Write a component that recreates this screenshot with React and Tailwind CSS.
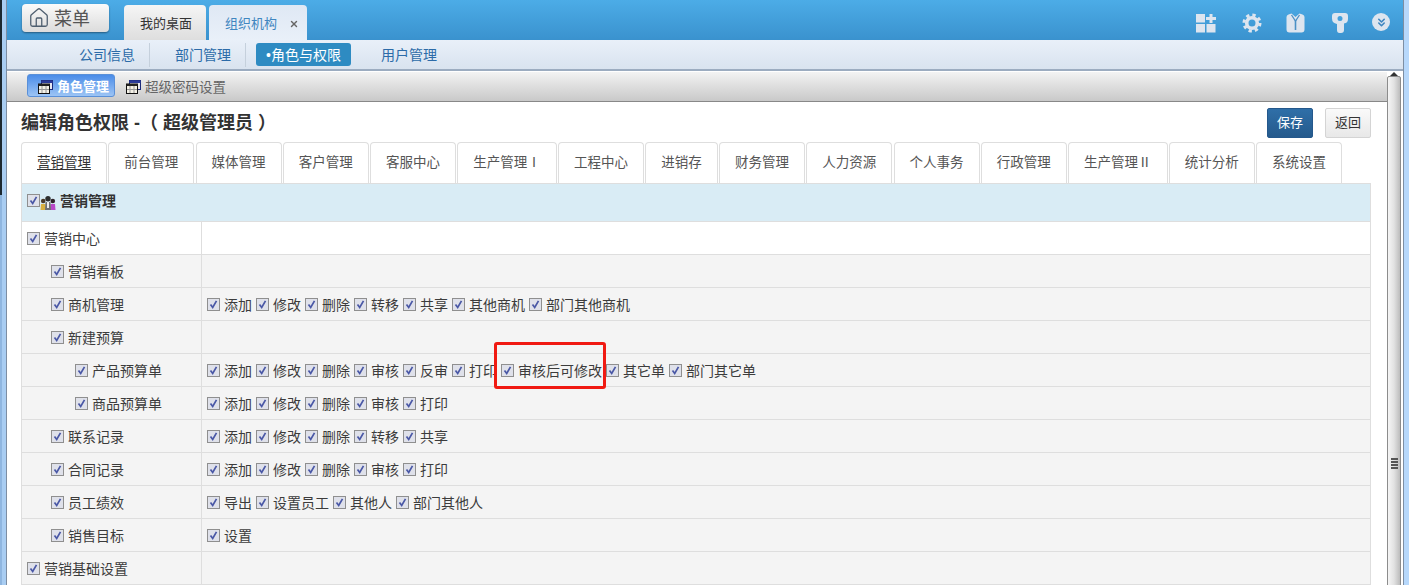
import React from 'react';
import { House, X, ChevronsDown } from 'lucide-react';

const topTabs = ['营销管理', '前台管理', '媒体管理', '客户管理', '客服中心', '生产管理Ⅰ', '工程中心', '进销存', '财务管理', '人力资源', '个人事务', '行政管理', '生产管理Ⅱ', '统计分析', '系统设置'];

const rows = [
  { label: '营销中心', level: 0, white: true, items: [] },
  { label: '营销看板', level: 1, items: [] },
  { label: '商机管理', level: 1, items: ['添加', '修改', '删除', '转移', '共享', '其他商机', '部门其他商机'] },
  { label: '新建预算', level: 1, items: [] },
  { label: '产品预算单', level: 2, items: ['添加', '修改', '删除', '审核', '反审', '打印', '审核后可修改', '其它单', '部门其它单'] },
  { label: '商品预算单', level: 2, items: ['添加', '修改', '删除', '审核', '打印'] },
  { label: '联系记录', level: 1, items: ['添加', '修改', '删除', '转移', '共享'] },
  { label: '合同记录', level: 1, items: ['添加', '修改', '删除', '审核', '打印'] },
  { label: '员工绩效', level: 1, items: ['导出', '设置员工', '其他人', '部门其他人'] },
  { label: '销售目标', level: 1, items: ['设置'] },
  { label: '营销基础设置', level: 0, items: [] },
];

const Check = () => (
  <span className="flex h-[13px] w-[13px] shrink-0 items-center justify-center border border-[#8f8f8f] bg-[#dfe1ea]">
    <svg width="11" height="11" viewBox="0 0 11 11" fill="none">
      <path d="M2.5 5.5 L4.7 8.5 L8.5 1.8" stroke="#4a58a6" strokeWidth="1.7" />
    </svg>
  </span>
);

const WinIcon = () => (
  <svg width="15" height="14" viewBox="0 0 15 14">
    <rect x="3.5" y="0.5" width="11" height="9" fill="#e8e8f0" stroke="#1b2a7a" />
    <rect x="3.5" y="0.5" width="11" height="2.5" fill="#2a3a9a" />
    <rect x="0.5" y="4" width="11" height="9.5" fill="#f4f1e6" stroke="#111" />
    <rect x="0.5" y="4" width="11" height="2" fill="#222" />
    <path d="M4 6v7M8 6v7M1 9.5h10" stroke="#999" />
  </svg>
);

const PeopleIcon = () => (
  <svg width="16" height="14" viewBox="0 0 16 14">
    <circle cx="3.2" cy="5" r="2.3" fill="#4a3a28" />
    <path d="M0.5 14 L1 8 H5.5 L6 14Z" fill="#d8b040" />
    <circle cx="12.8" cy="5" r="2.3" fill="#2e2228" />
    <path d="M10 14 L10.500 8 H15 L15.500 14Z" fill="#b848c8" />
    <circle cx="8" cy="2.800" r="2.700" fill="#2e2e2e" />
    <path d="M5 14 L5.500 6 H10.500 L11 14Z" fill="#6d6f72" />
    <path d="M7 6 H9 V12 H7Z" fill="#eeeeee" />
  </svg>
);

const AddGridIcon = () => (
  <svg width="20" height="20" viewBox="0 0 20 20" fill="#dde5ef">
    <rect x="0" y="1" width="9" height="8.500" />
    <rect x="0" y="11" width="9" height="8.500" />
    <rect x="10.500" y="11" width="9" height="8.500" />
    <path d="M13.500 1h3v3h3.500v3h-3.500v3h-3v-3H10V4h3.500Z" />
  </svg>
);

const GearIcon = () => (
  <svg width="20" height="20" viewBox="0 0 20 20" fill="none">
    <circle cx="10" cy="10" r="8" stroke="#dde5ef" strokeWidth="3" strokeDasharray="3.3 3" />
    <circle cx="10" cy="10" r="5.300" stroke="#dde5ef" strokeWidth="3.600" />
  </svg>
);

const ShirtIcon = () => (
  <svg width="19" height="20" viewBox="0 0 19 20">
    <path d="M0.500 4 Q0.500 2 2.500 1.500 L5.500 0.500 L9.500 4 L13.500 0.500 L16.500 1.500 Q18.500 2 18.500 4 V16.500 Q18.500 19.500 15.500 19.500 H3.500 Q0.500 19.500 0.500 16.500Z" fill="#dde5ef" />
    <path d="M5.500 2 L9.500 8 L13.500 2" stroke="#4b91c6" strokeWidth="1.300" fill="none" />
    <path d="M9.500 7 V17" stroke="#4b91c6" strokeWidth="1.600" />
  </svg>
);

const KeyIcon = () => (
  <svg width="16" height="20" viewBox="0 0 16 20">
    <path fillRule="evenodd" d="M3 0H13Q16 0 16 3V6Q16 10 12 10.500V17Q12 20 9 20H7.500Q5 20 5 17V11Q0 10 0 5.500V3Q0 0 3 0ZM8 3a2.500 2.500 0 1 0 0 5 2.500 2.500 0 0 0 0-5Z" fill="#dde5ef" />
  </svg>
);

const Row = ({ row }) => {
  const indent = ['pl-[5px]', 'pl-[29px]', 'pl-[53px]'][row.level];
  return (
    <div className={`flex h-[33px] border-b border-[#dedede] ${row.white ? 'bg-white' : 'bg-[#f4f4f4]'}`}>
      <div className={`flex w-[180px] shrink-0 items-center gap-1 border-r border-[#dedede] ${indent}`}>
        <Check />
        <span className="pt-[2px]">{row.label}</span>
      </div>
      <div className="flex flex-1 items-center gap-1 pl-[5px]">
        {row.items.map((item) => (
          <div key={item} className="relative flex items-center gap-1">
            <Check />
            <span className="pt-[2px]">{item}</span>
            {item === '审核后可修改' && (
              <div className="absolute left-[-7px] top-[-17px] h-[47px] w-[112px] rounded-[3px] border-[3px] border-[#f01a12]" />
            )}
          </div>
        ))}
      </div>
    </div>
  );
};

export default function App() {
  return (
    <div className="flex h-[585px] w-[1409px] overflow-hidden bg-white text-[14px] leading-[20px] text-[#3c3c3c] font-['Liberation_Sans','Noto_Sans_CJK_SC',sans-serif]">
      <div className="w-[2px] shrink-0 bg-[linear-gradient(to_bottom,#1c2830_195px,#8fb6e0_195px)]" />
      <div className="w-[4px] shrink-0 bg-[#a9cdf2]" />

      <div className="flex min-w-0 flex-1 flex-col border-l border-[#7d8ea3]">
        {/* top bar */}
        <div className="flex h-[40px] shrink-0 items-start bg-gradient-to-b from-[#4cace7] to-[#3a92ce] pl-[15px] pr-[13px]">
          <div className="mt-[4px] flex h-[28px] w-[87px] items-center gap-[4px] rounded-[4px] bg-gradient-to-b from-[#fafafa] to-[#dcdcdc] pl-[6px] text-[18px] text-[#555] shadow-[0_1px_2px_rgba(0,0,0,0.4)]">
            <House size={22} strokeWidth={1.4} className="text-[#4f5f70]" />
            <span className="pt-[2px]">菜单</span>
          </div>
          <div className="ml-[15px] mt-[5px] flex h-[35px] w-[82px] items-center justify-center rounded-t-[4px] bg-gradient-to-b from-[#f5f5f5] to-[#dedede] pl-[2px] pt-[2px] text-[13px] text-[#333]">
            我的桌面
          </div>
          <div className="ml-[3px] mt-[5px] flex h-[35px] w-[98px] items-center gap-[12px] rounded-t-[4px] bg-gradient-to-b from-[#dfe8f4] to-[#e9f0f9] pl-[16px] pt-[2px] text-[13px] text-[#3f86c0]">
            组织机构
            <X size={10} strokeWidth={3.5} className="text-[#666]" />
          </div>
          <div className="ml-auto mt-[13px] flex items-start">
            <AddGridIcon />
            <div className="ml-[26px]"><GearIcon /></div>
            <div className="ml-[24px]"><ShirtIcon /></div>
            <div className="ml-[27px]"><KeyIcon /></div>
            <div className="ml-[24px] flex h-[18px] w-[18px] items-center justify-center rounded-full bg-[#dde5ef]">
              <ChevronsDown size={13} strokeWidth={3} className="text-[#3f86c0]" />
            </div>
          </div>
        </div>

        {/* sub nav */}
        <div className="flex h-[31px] shrink-0 items-center border-b-2 border-[#9cacc0] bg-gradient-to-b from-[#e9f0f9] to-[#d9e3ef] pl-[72px] text-[#2c6ba8]">
          <span>公司信息</span>
          <span className="ml-[14px] h-[24px] w-px bg-[#c5d0dc]" />
          <span className="ml-[25px]">部门管理</span>
          <span className="ml-[14px] h-[24px] w-px bg-[#c5d0dc]" />
          <span className="ml-[10px] flex h-[23px] w-[95px] items-center justify-center rounded-[3px] bg-[#2e8bc2] text-white">•角色与权限</span>
          <span className="ml-[30px]">用户管理</span>
        </div>

        <div className="flex min-h-0 flex-1">
          <div className="min-w-0 flex-1">
            {/* toolbar */}
            <div className="mt-[1px] flex h-[30px] items-center border-b border-[#888] bg-gradient-to-b from-[#f3f3f3] to-[#c9c9c9] pl-[20px] text-[13.5px] text-[#666]">
              <div className="mb-[2px] flex h-[23px] w-[88px] items-center gap-[4px] rounded-[3px] border border-[#5a90d8] bg-gradient-to-b from-[#4a8ce8] to-[#9cc4f4] pl-[10px] text-[13px] font-bold text-white">
                <span className="pt-[2px]"><WinIcon /></span>
                <span className="pt-[2px]">角色管理</span>
              </div>
              <div className="ml-[11px] flex items-center gap-[4px]">
                <WinIcon />
                <span className="pt-[2px]">超级密码设置</span>
              </div>
            </div>

            {/* content */}
            <div className="pl-[14px] pr-[16px]">
              <div className="flex h-[40px] items-center justify-between pt-[1px]">
                <h1 className="whitespace-pre text-[18px] font-bold text-[#333]">编辑角色权限 -（ 超级管理员 ）</h1>
                <div className="flex gap-[12px]">
                  <button className="flex h-[30px] w-[46px] items-center justify-center rounded-[2px] border border-[#24588c] bg-gradient-to-b from-[#2f6fa8] to-[#255a8c] text-[13px] text-white">保存</button>
                  <button className="flex h-[30px] w-[46px] items-center justify-center rounded-[2px] border border-[#d4d4d4] bg-gradient-to-b from-[#fafafa] to-[#e8e8e8] text-[13px] text-[#333]">返回</button>
                </div>
              </div>

              <div className="flex h-[41px] gap-[1.25px]">
                {topTabs.map((tab, i) => (
                  <div key={tab} className={`flex h-[41px] items-center rounded-t-[4px] border border-b-0 border-[#dedede] px-[15px] text-[13.5px] ${i === 0 ? 'text-[#333] underline underline-offset-2' : 'text-[#555]'}`}>
                    {tab}
                  </div>
                ))}
              </div>

              <div className="border-l border-r border-t border-[#dedede]">
                <div className="flex h-[38px] items-center border-b border-[#dedede] bg-[#d9ecf5] pb-[4px] pl-[5px] font-bold text-[#333]">
                  <span className="mb-[1px]"><Check /></span>
                  <span className="mt-[5px]"><PeopleIcon /></span>
                  <span className="ml-[4px]">营销管理</span>
                </div>
                {rows.map((row) => <Row key={row.label} row={row} />)}
              </div>
            </div>
          </div>

          {/* scrollbar */}
          <div className="flex w-[16px] shrink-0 flex-col pr-[2px] pt-[1px]">
            <div className="flex h-[18px] items-center justify-center">
              <span className="h-0 w-0 border-x-[4px] border-b-[4px] border-x-transparent border-b-[#333]" />
            </div>
            <div className="flex h-[775px] shrink-0 items-center justify-center rounded-t-[2px] border border-[#8c8c8c] bg-gradient-to-r from-[#f5f5f5] via-[#e2e2e2] to-[#bcbcbc]">
              <div className="flex flex-col gap-[1px]">
                <span className="h-[2px] w-[7px] bg-[#555]" />
                <span className="h-[2px] w-[7px] bg-[#555]" />
                <span className="h-[2px] w-[7px] bg-[#555]" />
                <span className="h-[2px] w-[7px] bg-[#555]" />
              </div>
            </div>
          </div>
        </div>
      </div>

      <div className="w-[6px] shrink-0 border-l border-[#7d8ea3] bg-[#b7d8fb]" />
    </div>
  );
}
